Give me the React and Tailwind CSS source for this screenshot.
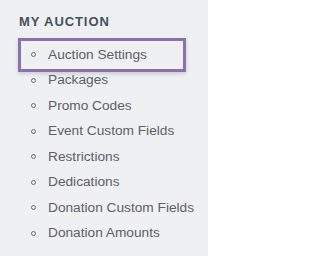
import React from 'react';

const items = [
  'Auction Settings',
  'Packages',
  'Promo Codes',
  'Event Custom Fields',
  'Restrictions',
  'Dedications',
  'Donation Custom Fields',
  'Donation Amounts',
];

export default function App() {
  const active = 'Auction Settings';

  return (
    <div className="w-[208px] h-[256px] bg-[#eef0f1] pl-[19px] pt-[14px] font-['Liberation_Sans',Arial,sans-serif] overflow-hidden">
      <h3 className="text-[13px] leading-4 font-bold tracking-[0.07em] text-[#43505c]">MY AUCTION</h3>

      <ul className="mt-[12px]">
        {items.map((item) => (
          <li key={item} className="relative flex items-center h-[25.5px] pl-3">
            {item === active && (
              // highlight frame around the current page
              <span className="absolute -left-px right-[22px] -top-[4px] -bottom-[4px] border-[3.5px] border-[#8a70b3] shadow-[0_2px_4px_rgba(0,0,0,0.15)]"></span>
            )}
            <span className="w-[5px] h-[5px] rounded-full border-[1.2px] border-[#686d74] shrink-0"></span>
            <span className="ml-3 text-[13.7px] leading-none text-[#5c6168] whitespace-nowrap">{item}</span>
          </li>
        ))}
      </ul>
    </div>
  );
}
